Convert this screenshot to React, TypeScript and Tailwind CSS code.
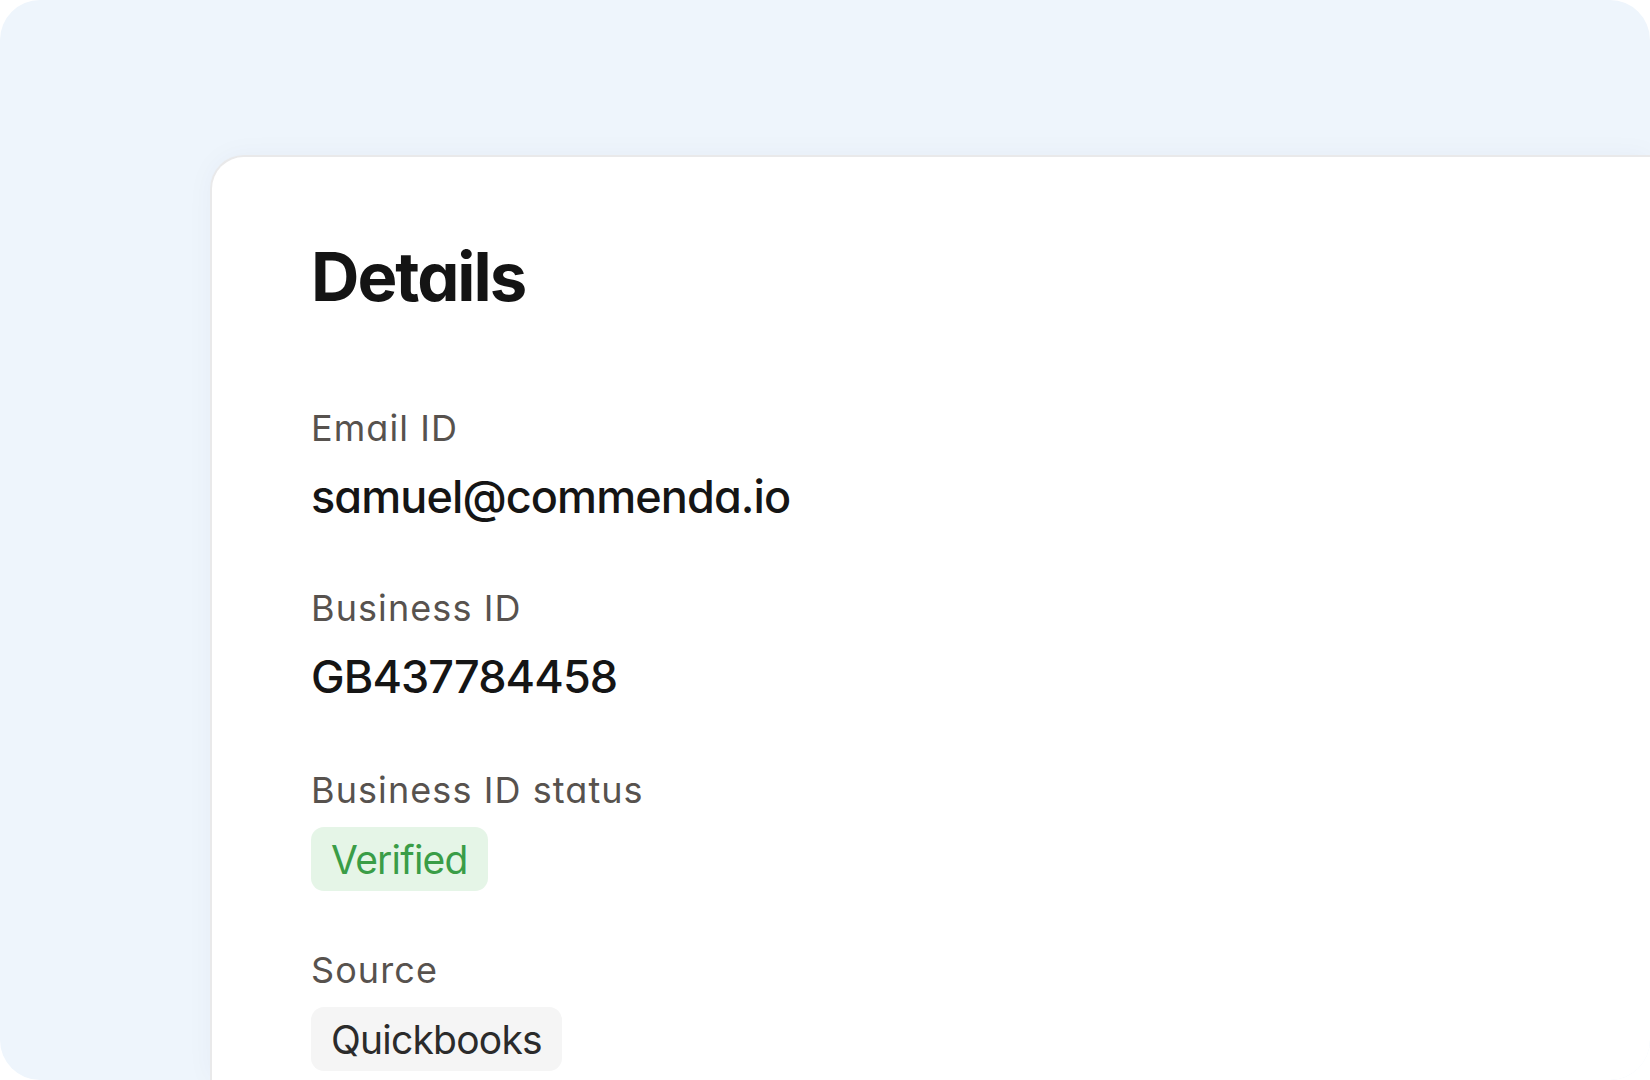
const FONT = "font-['Inter','Lato','Noto_Sans',sans-serif] [font-feature-settings:'cv11']";

function Field({ label, children, className = '' }: { label: string; children: React.ReactNode; className?: string }) {
  return (
    <div className={className}>
      <div className="text-[36px] leading-[34px] tracking-[0.03em] text-[#57524e]">{label}</div>
      {children}
    </div>
  );
}

function Value({ text }: { text: string }) {
  return (
    <div className="mt-[29px] text-[45px] leading-[45px] font-medium tracking-[-0.02em] text-[#151515]">{text}</div>
  );
}

function Pill({ text, tone }: { text: string; tone: 'green' | 'gray' }) {
  return (
    <div className="mt-[20px] flex">
      <span
        className={[
          'flex h-[64px] items-center rounded-[13px] px-[20px] text-[39px] leading-[39px] tracking-[-0.02em]',
          tone === 'green' ? 'bg-[#e5f5e7] text-[#3a9d47]' : 'bg-[#f5f5f5] text-[#2b2b2b]',
        ].join(' ')}
      >
        {text}
      </span>
    </div>
  );
}

export default function App() {
  return (
    <div className={`w-[1650px] h-[1080px] overflow-hidden rounded-[40px] bg-[#eef5fc] pl-[210px] pt-[155px] ${FONT}`}>
      <div className="flex h-full flex-col rounded-tl-[34px] border-l-2 border-t-2 border-[#e9e9ea] bg-white pl-[99px] pt-[86px] shadow-[0_0_28px_rgba(30,60,110,0.04)]">
        <h1 className="text-[67px] leading-[68px] font-bold tracking-[-0.03em] text-[#141414]">Details</h1>

        <Field label="Email ID" className="mt-[100px]">
          <Value text="samuel@commenda.io" />
        </Field>

        <Field label="Business ID" className="mt-[72px]">
          <Value text="GB437784458" />
        </Field>

        <Field label="Business ID status" className="mt-[74px]">
          <Pill text="Verified" tone="green" />
        </Field>

        <Field label="Source" className="mt-[62px]">
          <Pill text="Quickbooks" tone="gray" />
        </Field>
      </div>
    </div>
  );
}
